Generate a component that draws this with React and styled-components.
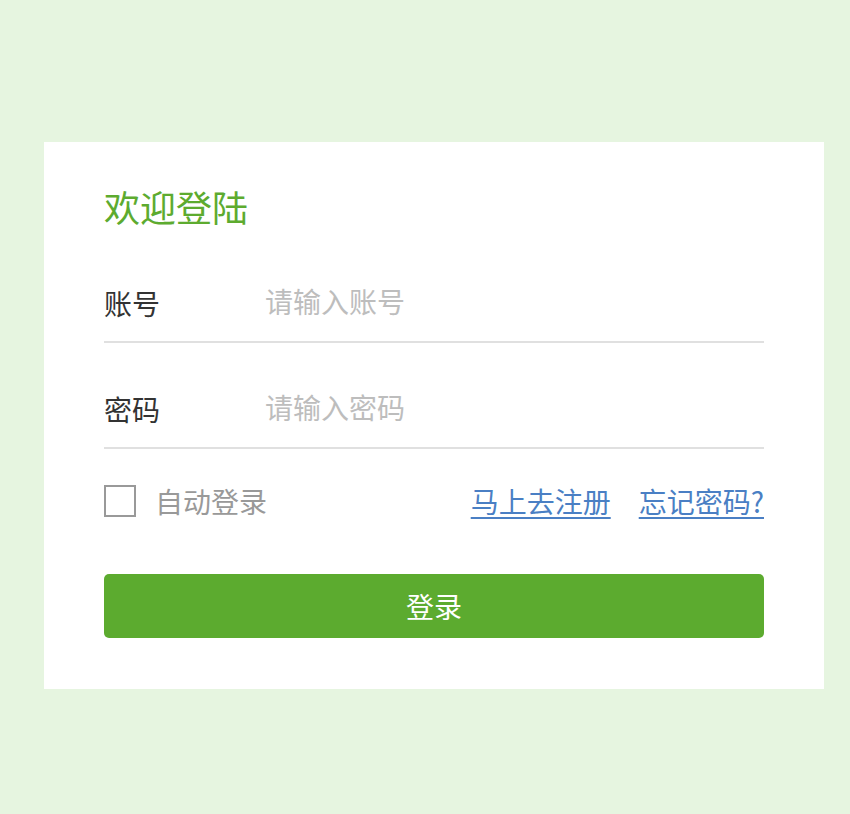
import React from "react";
import styled, { createGlobalStyle } from "styled-components";

const Global = createGlobalStyle`
  html, body { margin: 0; padding: 0; }
  body {
    background: #e6f5e0;
    font-family: "Noto Sans CJK SC", "Noto Sans", sans-serif;
  }
  input::placeholder { color: #bdbdbd; }
`;

const Page = styled.div`
  min-height: 814px;
  padding: 142px 0 0 44px;
  box-sizing: border-box;
`;

const Card = styled.form`
  width: 780px;
  box-sizing: border-box;
  background: #fff;
  padding: 39px 60px 51px;
  display: flex;
  flex-direction: column;
`;

const Title = styled.h1`
  margin: 0 0 30px;
  font-size: 36px;
  line-height: 50px;
  font-weight: 400;
  color: #5dab2f;
`;

const Field = styled.label`
  display: flex;
  align-items: center;
  height: 80px;
  border-bottom: 2px solid #e0e0e0;
  & + & { margin-top: 24px; }
`;

const FieldLabel = styled.span`
  width: 161px;
  flex: none;
  font-size: 28px;
  color: #333;
  padding-top: 4px;
`;

const Input = styled.input`
  flex: 1;
  border: none;
  outline: none;
  padding: 0;
  font-family: inherit;
  font-size: 28px;
  color: #333;
  background: transparent;
`;

const OptionsRow = styled.div`
  display: flex;
  align-items: center;
  height: 40px;
  margin-top: 32px;
`;

const Remember = styled.label`
  display: flex;
  align-items: center;
  gap: 19px;
  font-size: 28px;
  color: #999;
`;

const Box = styled.span`
  width: 32px;
  height: 32px;
  box-sizing: border-box;
  border: 2px solid #999;
`;

const Links = styled.div`
  margin-left: auto;
  display: flex;
  gap: 28px;
`;

const Link = styled.a`
  font-size: 28px;
  color: #4a7fc4;
  text-decoration: underline;
  text-underline-offset: 4px;
  text-decoration-thickness: 2px;
`;

const Submit = styled.button`
  margin-top: 53px;
  height: 64px;
  border: none;
  border-radius: 5px;
  background: #5cab2f;
  color: #fff;
  font-family: inherit;
  font-size: 28px;
  cursor: pointer;
`;

export default function App() {
  return (
    <>
      <Global />
      <Page>
        <Card onSubmit={(e) => e.preventDefault()}>
          <Title>欢迎登陆</Title>
          <Field>
            <FieldLabel>账号</FieldLabel>
            <Input placeholder="请输入账号" />
          </Field>
          <Field>
            <FieldLabel>密码</FieldLabel>
            <Input type="password" placeholder="请输入密码" />
          </Field>
          <OptionsRow>
            <Remember>
              <Box />
              自动登录
            </Remember>
            <Links>
              <Link href="#">马上去注册</Link>
              <Link href="#">忘记密码?</Link>
            </Links>
          </OptionsRow>
          <Submit type="submit">登录</Submit>
        </Card>
      </Page>
    </>
  );
}
